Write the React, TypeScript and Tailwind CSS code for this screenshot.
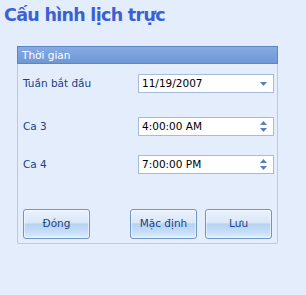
const font = { fontFamily: '"DejaVu Sans", "Liberation Sans", sans-serif' };

function DropArrow() {
  return (
    <svg width="7" height="4" viewBox="0 0 7 4" className="mr-[6px]">
      <path d="M0 0h7L3.5 4z" fill="#5a7fb5" />
    </svg>
  );
}

function Spin() {
  return (
    <div className="flex flex-col items-center gap-[3px] mr-[6px]">
      <svg width="7" height="4" viewBox="0 0 7 4">
        <path d="M0 4h7L3.5 0z" fill="#5a7fb5" />
      </svg>
      <svg width="7" height="4" viewBox="0 0 7 4">
        <path d="M0 0h7L3.5 4z" fill="#5a7fb5" />
      </svg>
    </div>
  );
}

function Field({ label, value, spin }: { label: string; value: string; spin?: boolean }) {
  return (
    <div className="flex items-center h-[19px]">
      <span className="w-[119px] pl-[4px] text-[10.5px] text-[#1c3f86]">{label}</span>
      <div className="flex items-center justify-between w-[136px] h-[19px] bg-white border border-[#a7bbd8]">
        <span className="pl-[3px] text-[10.5px] text-black">{value}</span>
        {spin ? <Spin /> : <DropArrow />}
      </div>
    </div>
  );
}

function Btn({ children }: { children: string }) {
  return (
    <button className="relative w-[67px] h-[30px] rounded-[3px] border border-[#7094c4] overflow-hidden bg-[linear-gradient(to_bottom,#eaf2fd_0%,#d9e7f9_45%,#b6d3f3_50%,#c7def7_80%,#def0fd_100%)] text-[10.5px] text-[#1c3f86] shadow-[inset_0_0_0_1px_rgba(255,255,255,0.5)]">
      {children}
    </button>
  );
}

export default function App() {
  return (
    <div className="w-[306px] h-[295px] bg-[#e3edfb] overflow-hidden" style={font}>
      <div className="h-[46px] pl-[4px] pt-[2px] text-[17.5px] tracking-[-0.7px] font-bold text-[#3b60d2]">Cấu hình lịch trực</div>
      <div className="ml-[17px] w-[261px] h-[198px] border border-[#b9cbe4] rounded-[2px] flex flex-col">
        <div className="h-[18px] -mx-px -mt-px bg-[linear-gradient(to_bottom,#86abe2,#6f97d5)] border border-[#5c86c6] text-white text-[10.5px] pl-[4px] leading-[16px]">
          Thời gian
        </div>
        <div className="flex flex-col pl-[1px] pt-[10px]">
          <Field label="Tuần bắt đầu" value="11/19/2007" />
          <div className="mt-[24px]">
            <Field label="Ca 3" value="4:00:00 AM" spin />
          </div>
          <div className="mt-[19px]">
            <Field label="Ca 4" value="7:00:00 PM" spin />
          </div>
        </div>
        <div className="flex pl-[5px] pr-[4px] mt-[35px]">
          <Btn>Đóng</Btn>
          <div className="ml-[40px]">
            <Btn>Mặc định</Btn>
          </div>
          <div className="ml-[8px]">
            <Btn>Lưu</Btn>
          </div>
        </div>
      </div>
    </div>
  );
}
